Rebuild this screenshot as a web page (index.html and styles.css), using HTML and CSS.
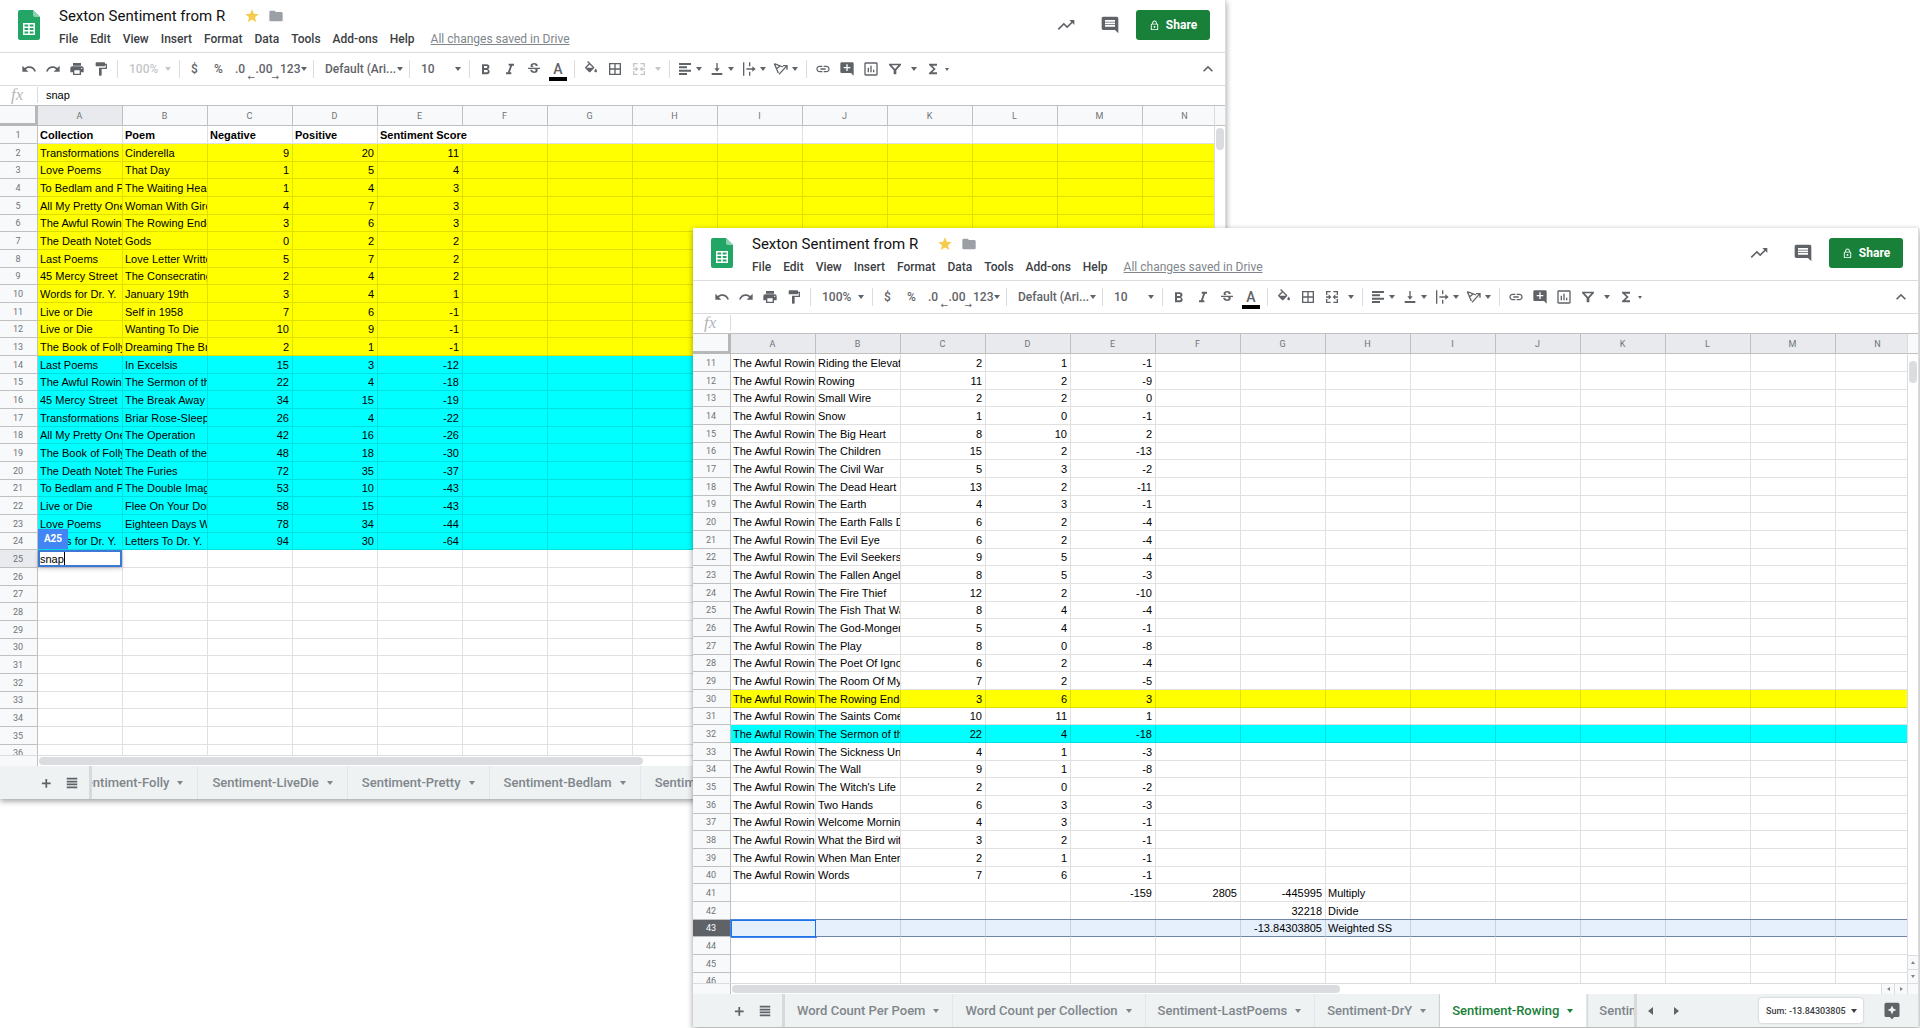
FILE: index.html
```
<!DOCTYPE html>
<html lang="en">
<head>
    <meta charset="UTF-8">
    <meta name="viewport" content="width=device-width, initial-scale=1.0">
    <title>Sexton Sentiment from R</title>
    <link rel="stylesheet" href="styles.css">
</head>
<body>
    <!-- Icon set -->
    <svg class="icon-defs" aria-hidden="true">
        <symbol id="i-undo" viewBox="0 0 24 24"><path d="M12.5 8c-2.65 0-5.05.99-6.9 2.6L2 7v9h9l-3.62-3.62c1.39-1.16 3.16-1.88 5.12-1.88 3.54 0 6.55 2.31 7.6 5.5l2.37-.78C21.08 11.03 17.15 8 12.5 8z"/></symbol>
        <symbol id="i-redo" viewBox="0 0 24 24"><path d="M18.4 10.6C16.55 8.99 14.15 8 11.5 8c-4.65 0-8.58 3.03-9.96 7.22L3.9 16c1.05-3.19 4.05-5.5 7.6-5.5 1.95 0 3.73.72 5.12 1.88L13 16h9V7l-3.6 3.6z"/></symbol>
        <symbol id="i-print" viewBox="0 0 24 24"><path d="M19 8H5c-1.66 0-3 1.34-3 3v6h4v4h12v-4h4v-6c0-1.66-1.34-3-3-3zm-3 11H8v-5h8v5zm3-7c-.55 0-1-.45-1-1s.45-1 1-1 1 .45 1 1-.45 1-1 1zm-1-9H6v4h12V3z"/></symbol>
        <symbol id="i-paint" viewBox="0 0 24 24"><path d="M18 4V3c0-.55-.45-1-1-1H5c-.55 0-1 .45-1 1v4c0 .55.45 1 1 1h12c.55 0 1-.45 1-1V6h1v4H9v11c0 .55.45 1 1 1h2c.55 0 1-.45 1-1v-9h8V4h-3z"/></symbol>
        <symbol id="i-bold" viewBox="0 0 24 24"><path d="M15.6 11.8c1-.7 1.6-1.8 1.6-2.8 0-2.3-1.8-4-4-4H6v15h7.8c2.1 0 3.7-1.7 3.7-3.8 0-1.5-.8-2.8-1.9-3.4zM9 7.5h3.500c.8 0 1.500.7 1.500 1.500s-.7 1.500-1.500 1.500H9zm4 9.500H9v-3.500h4c.9 0 1.700.8 1.700 1.700S13.900 17 13 17z"/></symbol>
        <symbol id="i-italic" viewBox="0 0 24 24"><path d="M10 4v3h2.200l-3.400 10H6v3h8v-3h-2.200l3.400-10H18V4z"/></symbol>
        <symbol id="i-strike" viewBox="0 0 24 24"><path d="M6.850 7.080C6.850 4.370 9.450 3 12.240 3c1.640 0 3 .49 3.900 1.280.77.65 1.460 1.730 1.460 3.240h-3.010c0-.31-.05-.59-.15-.85-.29-.86-1.200-1.280-2.250-1.280-1.860 0-2.340 1.020-2.340 1.700 0 .48.25.88.740 1.210.38.250.770.480 1.410.700H7.390c-.21-.34-.54-.89-.54-1.920zM21 12v-2H3v2h9.620c1.150.45 1.960.75 1.960 1.970 0 1-.81 1.670-2.280 1.670-1.540 0-2.930-.54-2.930-2.510H6.400c0 .55.080 1.130.240 1.580.81 2.290 3.290 3.300 5.670 3.300 2.270 0 5.300-.89 5.300-4.050 0-.3-.01-1.160-.480-1.940H21V12z"/></symbol>
        <symbol id="i-fill" viewBox="0 0 24 24"><path d="M16.560 8.940L7.620 0 6.210 1.410l2.380 2.380-5.150 5.150c-.59.59-.59 1.540 0 2.120l5.500 5.500c.29.29.68.44 1.060.44s.77-.15 1.060-.44l5.500-5.500c.59-.58.59-1.530 0-2.120zM5.210 10L10 5.210 14.790 10zM19 11.500s-2 2.170-2 3.500c0 1.100.9 2 2 2s2-.9 2-2c0-1.330-2-3.500-2-3.500z"/></symbol>
        <symbol id="i-borders" viewBox="0 0 24 24"><path d="M3 3v18h18V3H3zm8 16H5v-6h6v6zm0-8H5V5h6v6zm8 8h-6v-6h6v6zm0-8h-6V5h6v6z"/></symbol>
        <symbol id="i-merge" viewBox="0 0 24 24"><path d="M3 3h7v2H5v4H3zm11 0h7v6h-2V5h-5zM3 15h2v4h5v2H3zm16 0h2v6h-7v-2h5zM3 11h4V8l4 4-4 4v-3H3zm18 0h-4V8l-4 4 4 4v-3h4z"/></symbol>
        <symbol id="i-align" viewBox="0 0 24 24"><path d="M3 3h18v3H3zm0 5h12v3H3zm0 5h18v3H3zm0 5h12v3H3z"/></symbol>
        <symbol id="i-valign" viewBox="0 0 24 24"><path d="M16 11h-3V3h-2v8H8l4 5 4-5zM4 18v3h16v-3H4z"/></symbol>
        <symbol id="i-wrap" viewBox="0 0 24 24"><path d="M3 2h2v20H3zm9 0h2v6h-2zm0 14h2v6h-2zM8 11h9V8l5 4-5 4v-3H8z"/></symbol>
        <symbol id="i-rotate" viewBox="0 0 24 24"><path fill="none" stroke="currentColor" stroke-width="2" d="M2 4l6 14M2 4l13 5M5 12l6-5M9 20L20 8M15 7h6v6"/></symbol>
        <symbol id="i-link" viewBox="0 0 24 24"><path d="M3.900 12c0-1.710 1.390-3.100 3.100-3.100h4V7H7c-2.760 0-5 2.240-5 5s2.240 5 5 5h4v-1.900H7c-1.710 0-3.100-1.390-3.100-3.100zM8 13h8v-2H8v2zm9-6h-4v1.900h4c1.710 0 3.100 1.390 3.100 3.100s-1.390 3.100-3.100 3.100h-4V17h4c2.760 0 5-2.240 5-5s-2.240-5-5-5z"/></symbol>
        <symbol id="i-addcomment" viewBox="0 0 24 24"><path d="M22 4c0-1.100-.9-2-2-2H4c-1.100 0-2 .9-2 2v12c0 1.100.9 2 2 2h14l4 4V4zm-5 7h-4v4h-2v-4H7V9h4V5h2v4h4v2z"/></symbol>
        <symbol id="i-chart" viewBox="0 0 24 24"><path d="M9 17H7v-7h2v7zm4 0h-2V7h2v10zm4 0h-2v-4h2v4zm3 3H4V4h16v16zm0-18H4c-1.100 0-2 .9-2 2v16c0 1.100.9 2 2 2h16c1.100 0 2-.9 2-2V4c0-1.100-.9-2-2-2z"/></symbol>
        <symbol id="i-filter" viewBox="0 0 24 24"><path d="M3 4h18v2l-7 8v6h-4v-6L3 6zm4 2.500l5 5.500 5-5.500z" fill-rule="evenodd"/></symbol>
        <symbol id="i-sigma" viewBox="0 0 24 24"><path d="M18 4H6v2l6.500 6L6 18v2h12v-3h-7l5-5-5-5h7z"/></symbol>
        <symbol id="i-up" viewBox="0 0 24 24"><path d="M12 8l-6 6 1.410 1.410L12 10.830l4.590 4.580L18 14z"/></symbol>
        <symbol id="i-trend" viewBox="0 0 24 24"><path d="M16 6l2.290 2.290-4.880 4.880-4-4L2 16.590 3.410 18l6-6 4 4 6.300-6.290L22 12V6z"/></symbol>
        <symbol id="i-comment" viewBox="0 0 24 24"><path d="M21.990 4c0-1.100-.89-2-1.990-2H4c-1.100 0-2 .9-2 2v12c0 1.100.9 2 2 2h14l4 4-.01-18zM18 14H6v-2h12v2zm0-3H6V9h12v2zm0-3H6V6h12v2z"/></symbol>
        <symbol id="i-lock" viewBox="0 0 24 24"><path d="M18 8h-1V6c0-2.760-2.240-5-5-5S7 3.240 7 6v2H6c-1.100 0-2 .9-2 2v10c0 1.100.9 2 2 2h12c1.100 0 2-.9 2-2V10c0-1.100-.9-2-2-2zM9 6c0-1.660 1.340-3 3-3s3 1.340 3 3v2H9zm9 14H6V10h12zm-6-3c1.100 0 2-.9 2-2s-.9-2-2-2-2 .9-2 2 .9 2 2 2z"/></symbol>
        <symbol id="i-star" viewBox="0 0 24 24"><path d="M12 17.270L18.180 21l-1.640-7.030L22 9.240l-7.190-.61L12 2 9.190 8.630 2 9.240l5.460 4.730L5.820 21z"/></symbol>
        <symbol id="i-folder" viewBox="0 0 24 24"><path d="M10 4H4c-1.100 0-2 .9-2 2v12c0 1.100.9 2 2 2h16c1.100 0 2-.9 2-2V8c0-1.100-.9-2-2-2h-8z"/></symbol>
        <symbol id="i-plus" viewBox="0 0 24 24"><path d="M20 14h-6v6h-3v-6H5v-3h6V5h3v6h6z"/></symbol>
        <symbol id="i-sheets" viewBox="0 0 24 24"><path d="M3 3h18v3H3zm0 5h18v3H3zm0 5h18v3H3zm0 5h18v3H3z"/></symbol>
        <symbol id="i-explore" viewBox="0 0 24 24"><path d="M20 1H4a2 2 0 0 0-2 2v15a2 2 0 0 0 2 2h5l3 3 3-3h5a2 2 0 0 0 2-2V3a2 2 0 0 0-2-2zm-6.200 11.300L12 16.500l-1.800-4.200L6 10.500l4.200-1.800L12 4.500l1.800 4.200 4.200 1.800z"/></symbol>
    </svg>

    <!-- Title bar, menus, toolbar; shared by both windows -->
    <template id="chrome">
        <header class="header">
            <svg class="logo" viewBox="0 0 22 30">
                <path fill="#23a566" d="M2 0h13l7 7v21a2 2 0 0 1-2 2H2a2 2 0 0 1-2-2V2a2 2 0 0 1 2-2z"/>
                <path fill="#8ed1b1" d="M15 0l7 7h-5a2 2 0 0 1-2-2z"/>
                <path fill="#fff" fill-rule="evenodd" d="M5 13h12v12H5zm1.500 1.500v2h3.700v-2zm5.200 0v2h3.800v-2zm-5.200 3.500v2h3.700v-2zm5.200 0v2h3.800v-2zm-5.200 3.500v2h3.700v-2zm5.200 0v2h3.800v-2z"/>
            </svg>
            <div class="title-block">
                <div class="title-row">
                    <h1>Sexton Sentiment from R</h1>
                    <button class="star" aria-label="Star"><svg><use href="#i-star"/></svg></button>
                    <button class="folder" aria-label="Move"><svg><use href="#i-folder"/></svg></button>
                </div>
                <nav class="menu">
                    <button>File</button><button>Edit</button><button>View</button><button>Insert</button><button>Format</button><button>Data</button><button>Tools</button><button>Add-ons</button><button>Help</button>
                    <a href="#">All changes saved in Drive</a>
                </nav>
            </div>
            <div class="actions">
                <button aria-label="Activity"><svg><use href="#i-trend"/></svg></button>
                <button aria-label="Comments"><svg><use href="#i-comment"/></svg></button>
                <button class="share"><svg><use href="#i-lock"/></svg>Share</button>
            </div>
        </header>
        <div class="toolbar">
            <button aria-label="Undo"><svg><use href="#i-undo"/></svg></button>
            <button aria-label="Redo"><svg><use href="#i-redo"/></svg></button>
            <button aria-label="Print"><svg><use href="#i-print"/></svg></button>
            <button aria-label="Paint format"><svg><use href="#i-paint"/></svg></button>
            <span class="sep"></span>
            <label class="select zoom"><select aria-label="Zoom"><option>100%</option></select></label>
            <span class="sep"></span>
            <button class="text" aria-label="Currency">$</button>
            <button class="text" aria-label="Percent">%</button>
            <button class="text dec-less" aria-label="Decrease decimal places">.0</button>
            <button class="text dec-more" aria-label="Increase decimal places">.00</button>
            <button class="number">123<span class="caret"></span></button>
            <span class="sep"></span>
            <label class="select font"><select aria-label="Font"><option>Default (Ari...</option></select></label>
            <span class="sep"></span>
            <label class="select size"><select aria-label="Font size"><option>10</option></select></label>
            <span class="sep"></span>
            <button aria-label="Bold"><svg><use href="#i-bold"/></svg></button>
            <button aria-label="Italic"><svg><use href="#i-italic"/></svg></button>
            <button aria-label="Strikethrough"><svg><use href="#i-strike"/></svg></button>
            <button class="color" aria-label="Text color">A</button>
            <span class="sep"></span>
            <button aria-label="Fill color"><svg><use href="#i-fill"/></svg></button>
            <button aria-label="Borders"><svg><use href="#i-borders"/></svg></button>
            <button class="merge" aria-label="Merge cells"><svg><use href="#i-merge"/></svg><span class="caret"></span></button>
            <span class="sep"></span>
            <button class="drop" aria-label="Horizontal align"><svg><use href="#i-align"/></svg><span class="caret"></span></button>
            <button class="drop" aria-label="Vertical align"><svg><use href="#i-valign"/></svg><span class="caret"></span></button>
            <button class="drop" aria-label="Text wrapping"><svg><use href="#i-wrap"/></svg><span class="caret"></span></button>
            <button class="drop" aria-label="Text rotation"><svg><use href="#i-rotate"/></svg><span class="caret"></span></button>
            <span class="sep"></span>
            <button aria-label="Insert link"><svg><use href="#i-link"/></svg></button>
            <button aria-label="Insert comment"><svg><use href="#i-addcomment"/></svg></button>
            <button aria-label="Insert chart"><svg><use href="#i-chart"/></svg></button>
            <button aria-label="Filter"><svg><use href="#i-filter"/></svg></button>
            <button class="caret-only" aria-label="Filter views"><span class="caret"></span></button>
            <button aria-label="Functions"><svg><use href="#i-sigma"/></svg></button>
            <span class="caret small"></span>
            <button class="collapse" aria-label="Hide menus"><svg><use href="#i-up"/></svg></button>
        </div>
    </template>

    <main class="desktop">
        <section class="window back" id="overview">
            <div class="formula">
                <label for="fx-overview">fx</label>
                <input id="fx-overview" type="text" value="snap">
            </div>
            <div class="sheet">
                <div class="grid"><table></table></div>
                <div class="vscroll"><div class="thumb"></div></div>
            </div>
            <div class="hscroll"><div class="gutter"></div><div class="track"><div class="thumb"></div></div></div>
            <footer class="tabs">
                <button class="tool" aria-label="Add sheet"><svg><use href="#i-plus"/></svg></button>
                <button class="tool" aria-label="All sheets"><svg><use href="#i-sheets"/></svg></button>
                <div class="strip scrolled">
                    <button>Sentiment-Folly<span class="caret"></span></button>
                    <button>Sentiment-LiveDie<span class="caret"></span></button>
                    <button>Sentiment-Pretty<span class="caret"></span></button>
                    <button>Sentiment-Bedlam<span class="caret"></span></button>
                    <button>Sentiment-Transform<span class="caret"></span></button>
                </div>
            </footer>
        </section>

        <section class="window front" id="rowing">
            <div class="formula">
                <label for="fx-rowing">fx</label>
                <input id="fx-rowing" type="text" value="">
            </div>
            <div class="sheet">
                <div class="grid"><table></table></div>
                <div class="vscroll">
                    <div class="thumb"></div>
                    <button class="step" aria-label="Scroll up"><span class="arrow up"></span></button>
                    <button class="step" aria-label="Scroll down"><span class="arrow down"></span></button>
                </div>
            </div>
            <div class="hscroll">
                <div class="gutter"></div>
                <div class="track"><div class="thumb"></div></div>
                <button class="step" aria-label="Scroll left"><span class="arrow left"></span></button>
                <button class="step" aria-label="Scroll right"><span class="arrow right"></span></button>
                <div class="corner"></div>
            </div>
            <footer class="tabs">
                <button class="tool" aria-label="Add sheet"><svg><use href="#i-plus"/></svg></button>
                <button class="tool" aria-label="All sheets"><svg><use href="#i-sheets"/></svg></button>
                <div class="strip">
                    <button>Word Count Per Poem<span class="caret"></span></button>
                    <button>Word Count per Collection<span class="caret"></span></button>
                    <button>Sentiment-LastPoems<span class="caret"></span></button>
                    <button>Sentiment-DrY<span class="caret"></span></button>
                    <button class="active">Sentiment-Rowing<span class="caret"></span></button>
                    <button>Sentiment-Death<span class="caret"></span></button>
                </div>
                <button class="page" aria-label="Previous sheets"><span class="arrow left"></span></button>
                <button class="page" aria-label="Next sheets"><span class="arrow right"></span></button>
                <label class="select sum"><select aria-label="Summary"><option>Sum: -13.84303805</option></select></label>
                <button class="explore" aria-label="Explore"><svg><use href="#i-explore"/></svg></button>
            </footer>
        </section>
    </main>

    <script src="script.js"></script>
</body>
</html>
```

FILE: styles.css
```
* {
    box-sizing: border-box;
}

body {
    margin: 0;
    background: #fff;
    color: #3c4043;
    font-family: Roboto, "Liberation Sans", sans-serif;
    font-size: 12px;
}

button, select, input {
    margin: 0;
    padding: 0;
    border: none;
    background: none;
    color: inherit;
    font: inherit;
}

button {
    display: flex;
    align-items: center;
    justify-content: center;
    flex: none;
}

svg {
    width: 16px;
    height: 16px;
    flex: none;
    fill: currentColor;
}

.icon-defs {
    display: none;
}

.desktop {
    position: relative;
    height: 100vh;
    min-height: 640px;
    overflow: hidden;
}

.window {
    position: absolute;
    display: flex;
    flex-direction: column;
    background: #fff;
    border-right: 1px solid #dadce0;
    box-shadow: 0 2px 6px rgba(0, 0, 0, 0.4);
}

.window.back {
    top: 0;
    bottom: 229px;
    left: 0;
    right: 694px;
}

.window.front {
    top: 228px;
    bottom: 1px;
    left: 693px;
    right: 1px;
}

/* Header */
.header {
    display: flex;
    height: 53px;
    padding: 5px 15px 0 18px;
    border-bottom: 1px solid #dadce0;
}

.logo {
    width: 22px;
    height: 30px;
    margin: 5px 19px 0 0;
}

.title-row {
    display: flex;
    align-items: center;
    height: 22px;
}

h1 {
    margin: 0 19px 0 0;
    color: #111;
    font-size: 15px;
    font-weight: 400;
}

.star {
    color: #f7cb4d;
    margin-right: 8px;
}

.folder {
    color: #9aa0a6;
}

.menu {
    display: flex;
    align-items: center;
    gap: 12px;
    height: 24px;
    font-weight: 500;
}

.menu a {
    margin-left: 4px;
    color: #80868b;
    font-weight: 400;
}

.actions {
    display: flex;
    align-items: center;
    gap: 24px;
    height: 40px;
    margin-left: auto;
    color: #5f6368;
}

.actions svg {
    width: 20px;
    height: 20px;
}

.share {
    gap: 6px;
    width: 74px;
    height: 30px;
    margin-left: -8px;
    border-radius: 3px;
    background: #188038;
    color: #fff;
    font-size: 12px;
    font-weight: 700;
}

.actions .share svg {
    width: 11px;
    height: 11px;
}

/* Toolbar */
.toolbar {
    display: flex;
    align-items: center;
    height: 33px;
    padding: 0 5px 0 17px;
    border-bottom: 1px solid #dadce0;
    color: #5f6368;
    font-weight: 500;
}

.toolbar button {
    width: 24px;
    height: 24px;
}

.toolbar .text {
    padding-right: 3px;
}

.toolbar .dec-less, .toolbar .dec-more {
    position: relative;
    padding-right: 8px;
}

.dec-less::after, .dec-more::after {
    position: absolute;
    right: 1px;
    bottom: -1px;
    font-size: 9px;
    line-height: 9px;
    font-family: "DejaVu Sans", sans-serif;
}

.dec-less::after {
    content: "←";
}

.dec-more::after {
    content: "→";
}

.toolbar .number {
    width: 29px;
    gap: 1px;
    justify-content: flex-start;
}

.toolbar .color {
    height: 20px;
    border-bottom: 4px solid #000;
    width: 18px;
    margin: 4px 3px 0;
    font-size: 14px;
}

.toolbar .merge {
    width: 38px;
    gap: 8px;
    padding-left: 4px;
    justify-content: flex-start;
}

.toolbar .drop {
    width: 32px;
    gap: 3px;
    justify-content: flex-start;
    padding-left: 3px;
}

.toolbar .caret-only {
    width: 14px;
}

.toolbar .collapse {
    margin-left: auto;
}

.collapse svg {
    width: 20px;
    height: 20px;
}

.sep {
    width: 1px;
    height: 18px;
    margin: 0 4px;
    background: #dadce0;
    flex: none;
}

.caret {
    width: 0;
    height: 0;
    border: 3px solid transparent;
    border-top: 4px solid currentColor;
    border-bottom: none;
}

.caret.small {
    border-width: 3px 2px 0;
}

.select {
    display: flex;
    align-items: center;
    height: 24px;
}

.select::after {
    content: "";
    margin: 0 4px 0 auto;
    border: 3px solid transparent;
    border-top: 4px solid currentColor;
    border-bottom: none;
}

.select select {
    appearance: none;
    padding-left: 7px;
}

.zoom {
    width: 53px;
}

.size {
    width: 51px;
}

.font {
    width: 87px;
}

.zoom, .size, .font {
    flex: none;
}

.back .zoom, .back .merge {
    color: #c4c7ca;
}

/* Formula bar */
.formula {
    display: flex;
    align-items: center;
    height: 20px;
    padding-bottom: 1px;
    border-bottom: 1px solid #c0c0c0;
}

.formula label {
    width: 38px;
    padding-left: 11px;
    border-right: 1px solid #dadce0;
    color: #b4b7ba;
    font: italic 17px/16px "Liberation Serif", serif;
}

.formula input {
    flex: 1;
    padding-left: 8px;
    color: #000;
    font: 11px "Liberation Sans", Arial, sans-serif;
}

/* Grid */
.sheet {
    display: flex;
    flex: 1;
    min-height: 0;
}

.grid {
    flex: 1;
    min-width: 0;
    overflow: hidden;
}

table {
    table-layout: fixed;
    width: 1228px;
    border-spacing: 0;
    color: #000;
    font: 11px/16px "Liberation Sans", Arial, sans-serif;
}

.num-col {
    width: 38px;
}

td, th {
    height: 18px;
    padding: 0 3px 0 2px;
    border-right: 1px solid rgba(0, 0, 0, 0.12);
    border-bottom: 1px solid rgba(0, 0, 0, 0.12);
    overflow: hidden;
    white-space: nowrap;
    text-align: left;
}

tbody tr:nth-child(3n) > * {
    height: 17px;
    line-height: 15px;
}

th {
    border-color: #c0c0c0;
    background: #f8f9fa;
    color: #6f7478;
    font-family: Roboto, sans-serif;
    font-size: 9px;
    font-weight: 400;
    text-align: center;
}

thead th {
    height: 20px;
}

thead .all {
    border-right: 3px solid #b7b7b7;
    border-bottom: 3px solid #b7b7b7;
}

th.on {
    background: #e8eaed;
}

.n {
    text-align: right;
}

.head td {
    font-weight: 700;
}

.yellow td {
    background: #ff0;
}

.cyan td {
    background: #0ff;
}

.selected td {
    border-bottom-color: #6f86a6;
    background: #e6effc;
    box-shadow: 0 -1px #6f86a6;
}

.selected th {
    background: #5f6368;
    color: #fff;
}

.selected .cursor {
    border: 1px solid #1a73e8;
    box-shadow: 0 0 0 1px #4a86e8;
}

td.editing {
    position: relative;
    padding: 0;
    overflow: visible;
}

.editor {
    display: flex;
    align-items: center;
    height: 17px;
    border: 2px solid #3c78d8;
    background: #fff;
    box-shadow: 0 2px 4px rgba(0, 0, 0, 0.2);
}

.editor input {
    field-sizing: content;
    height: 13px;
    border-right: 1px solid #000;
}

.cell-tag {
    position: absolute;
    left: 0;
    bottom: 100%;
    width: 30px;
    height: 20px;
    margin-bottom: 1px;
    background: #4285f4;
    color: #fff;
    font: 700 10px/20px Roboto, sans-serif;
    text-align: center;
}

/* Scrollbars */
.vscroll {
    display: flex;
    flex-direction: column;
    width: 11px;
    padding-top: 22px;
    border-left: 1px solid #dadce0;
    background: linear-gradient(#f8f9fa 19px, #c0c0c0 19px 20px, #fff 20px);
}

.vscroll .thumb {
    width: 8px;
    height: 22px;
    margin: 0 1px auto;
}

.front .vscroll .thumb {
    margin-top: 5px;
}

.thumb {
    border-radius: 4px;
    background: #dadce0;
}

.step {
    height: 14px;
    border-top: 1px solid #dadce0;
    background: #f8f9fa;
    color: #80868b;
}

.hscroll {
    display: flex;
    height: 11px;
    border-top: 1px solid #dadce0;
}

.gutter {
    width: 38px;
    border-right: 1px solid #c0c0c0;
    background: #f8f9fa;
}

.track {
    flex: 1;
    padding: 1px 1px;
}

.track .thumb {
    width: 53%;
    height: 8px;
}

.back .track .thumb {
    width: 51%;
}

.hscroll .step {
    width: 13px;
    height: 10px;
    border-top: none;
    border-left: 1px solid #dadce0;
}

.corner {
    width: 11px;
    border-left: 1px solid #dadce0;
    background: #f8f9fa;
}

.arrow {
    border: 2px solid transparent;
}

.arrow.up {
    border-top: none;
    border-bottom: 3px solid currentColor;
}

.arrow.down {
    border-bottom: none;
    border-top: 3px solid currentColor;
}

.arrow.left {
    border-left: none;
    border-right: 3px solid currentColor;
}

.arrow.right {
    border-right: none;
    border-left: 3px solid currentColor;
}

/* Sheet tabs */
.tabs {
    display: flex;
    align-items: center;
    height: 33px;
    padding-left: 33px;
    background: #eef2f3;
    color: #5f6368;
}

.tabs .tool {
    width: 26px;
    height: 26px;
}

.tabs .tool svg {
    width: 14px;
    height: 14px;
}

.strip {
    display: flex;
    flex: 1;
    align-self: stretch;
    min-width: 0;
    margin-left: 4px;
    border-left: 3px solid #d8d9dc;
    overflow: hidden;
}

.front .strip {
    border-right: 3px solid #d8d9dc;
}

.strip button {
    gap: 8px;
    padding: 0 13px 0 12px;
    border-right: 1px solid #e3e7e9;
    color: #80868b;
    font-size: 13px;
    font-weight: 500;
}

.scrolled button:first-child {
    margin-left: -28px;
}

.scrolled button {
    padding: 0 14px;
}

.strip .active {
    background: #fff;
    color: #188038;
    box-shadow: 0 0 2px rgba(0, 0, 0, 0.3);
}

.page {
    width: 26px;
    height: 24px;
}

.page .arrow {
    border-width: 4px 5px;
}

.sum {
    height: 25px;
    margin: 0 20px 0 70px;
    border-radius: 3px;
    background: #fff;
    box-shadow: 0 0 2px rgba(0, 0, 0, 0.3);
    color: #3c4043;
    font-size: 9px;
    font-weight: 500;
}

.sum::after {
    margin: 0 6px 0 5px;
}

.explore {
    margin-right: 17px;
    color: #5f6368;
}

.explore svg {
    width: 18px;
    height: 18px;
}
```

FILE: script.js
```
const COLUMNS = "ABCDEFGHIJKLMN".split("");

// Each row: [class, A, B, C, D, E, F, G, H]
const overview = [
    ["head", "Collection", "Poem", "Negative", "Positive", "Sentiment Score"],
    ["yellow", "Transformations", "Cinderella", 9, 20, 11],
    ["yellow", "Love Poems", "That Day", 1, 5, 4],
    ["yellow", "To Bedlam and Part", "The Waiting Head", 1, 4, 3],
    ["yellow", "All My Pretty Ones", "Woman With Girdle", 4, 7, 3],
    ["yellow", "The Awful Rowing", "The Rowing Endeth", 3, 6, 3],
    ["yellow", "The Death Notebooks", "Gods", 0, 2, 2],
    ["yellow", "Last Poems", "Love Letter Written", 5, 7, 2],
    ["yellow", "45 Mercy Street", "The Consecrating", 2, 4, 2],
    ["yellow", "Words for Dr. Y.", "January 19th", 3, 4, 1],
    ["yellow", "Live or Die", "Self in 1958", 7, 6, -1],
    ["yellow", "Live or Die", "Wanting To Die", 10, 9, -1],
    ["yellow", "The Book of Folly", "Dreaming The Breasts", 2, 1, -1],
    ["cyan", "Last Poems", "In Excelsis", 15, 3, -12],
    ["cyan", "The Awful Rowing", "The Sermon of the", 22, 4, -18],
    ["cyan", "45 Mercy Street", "The Break Away", 34, 15, -19],
    ["cyan", "Transformations", "Briar Rose-Sleeping", 26, 4, -22],
    ["cyan", "All My Pretty Ones", "The Operation", 42, 16, -26],
    ["cyan", "The Book of Folly", "The Death of the", 48, 18, -30],
    ["cyan", "The Death Notebooks", "The Furies", 72, 35, -37],
    ["cyan", "To Bedlam and Part", "The Double Image", 53, 10, -43],
    ["cyan", "Live or Die", "Flee On Your Donkey", 58, 15, -43],
    ["cyan", "Love Poems", "Eighteen Days Without", 78, 34, -44],
    ["cyan", "Words for Dr. Y.", "Letters To Dr. Y.", 94, 30, -64]
];

const book = "The Awful Rowing";
const rowing = [
    ["", book, "Riding the Elevator", 2, 1, -1],
    ["", book, "Rowing", 11, 2, -9],
    ["", book, "Small Wire", 2, 2, 0],
    ["", book, "Snow", 1, 0, -1],
    ["", book, "The Big Heart", 8, 10, 2],
    ["", book, "The Children", 15, 2, -13],
    ["", book, "The Civil War", 5, 3, -2],
    ["", book, "The Dead Heart", 13, 2, -11],
    ["", book, "The Earth", 4, 3, -1],
    ["", book, "The Earth Falls Down", 6, 2, -4],
    ["", book, "The Evil Eye", 6, 2, -4],
    ["", book, "The Evil Seekers", 9, 5, -4],
    ["", book, "The Fallen Angels", 8, 5, -3],
    ["", book, "The Fire Thief", 12, 2, -10],
    ["", book, "The Fish That Walked", 8, 4, -4],
    ["", book, "The God-Monger", 5, 4, -1],
    ["", book, "The Play", 8, 0, -8],
    ["", book, "The Poet Of Ignorance", 6, 2, -4],
    ["", book, "The Room Of My Life", 7, 2, -5],
    ["yellow", book, "The Rowing Endeth", 3, 6, 3],
    ["", book, "The Saints Come", 10, 11, 1],
    ["cyan", book, "The Sermon of the", 22, 4, -18],
    ["", book, "The Sickness Unto", 4, 1, -3],
    ["", book, "The Wall", 9, 1, -8],
    ["", book, "The Witch's Life", 2, 0, -2],
    ["", book, "Two Hands", 6, 3, -3],
    ["", book, "Welcome Morning", 4, 3, -1],
    ["", book, "What the Bird with", 3, 2, -1],
    ["", book, "When Man Enters", 2, 1, -1],
    ["", book, "Words", 7, 6, -1],
    ["", "", "", "", "", -159, 2805, -445995, "Multiply"],
    ["", "", "", "", "", "", "", 32218, "Divide"],
    ["selected", "", "", "", "", "", "", -13.84303805, "Weighted SS"]
];

function cell(value, column, options, number) {
    if (options.edit === number && column === 0) {
        return `<td class="editing"><span class="cell-tag">A${number}</span><div class="editor"><input type="text" aria-label="A${number}" value="snap"></div></td>`;
    }
    if (value === "Sentiment Score") {
        return `<td colspan="2">${value}</td>`;
    }
    const names = [];
    if (typeof value === "number") names.push("n");
    if (options.cursor === number && column === 0) names.push("cursor");
    return `<td class="${names.join(" ")}">${value}</td>`;
}

function fillTable(id, rows, options) {
    let html = `<colgroup><col class="num-col"><col span="${COLUMNS.length}"></colgroup><thead><tr><th class="all"></th>`;
    COLUMNS.forEach((letter, i) => {
        const on = options.allColumns || i === 0;
        html += `<th class="${on ? "on" : ""}">${letter}</th>`;
    });
    html += "</tr></thead><tbody>";
    for (let number = options.first; number <= options.last; number++) {
        const [name, ...values] = rows[number - options.first] || [""];
        html += `<tr class="${name}"><th class="${options.edit === number ? "on" : ""}">${number}</th>`;
        for (let i = 0; i < COLUMNS.length; i++) {
            html += cell(values[i] ?? "", i, options, number);
            if (values[i] === "Sentiment Score") i++;
        }
        html += "</tr>";
    }
    document.querySelector(`#${id} table`).innerHTML = html + "</tbody>";
}

document.querySelectorAll(".window").forEach(win => {
    win.prepend(document.getElementById("chrome").content.cloneNode(true));
});

fillTable("overview", overview, { first: 1, last: 36, edit: 25 });
fillTable("rowing", rowing, { first: 11, last: 46, cursor: 43, allColumns: true });
```
